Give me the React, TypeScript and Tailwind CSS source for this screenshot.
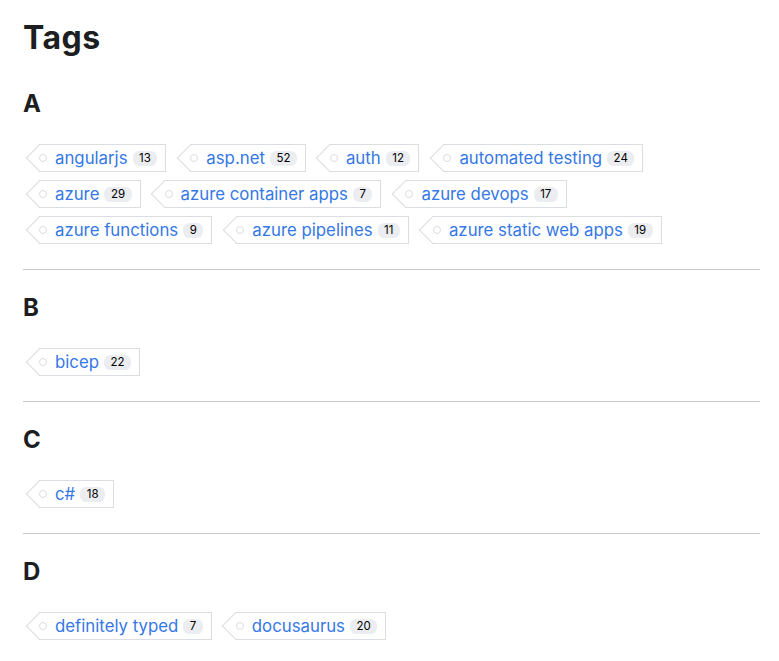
import React from "react";

type Tag = { name: string; count: number };

const sections: { letter: string; tags: Tag[] }[] = [
  {
    letter: "A",
    tags: [
      { name: "angularjs", count: 13 },
      { name: "asp.net", count: 52 },
      { name: "auth", count: 12 },
      { name: "automated testing", count: 24 },
      { name: "azure", count: 29 },
      { name: "azure container apps", count: 7 },
      { name: "azure devops", count: 17 },
      { name: "azure functions", count: 9 },
      { name: "azure pipelines", count: 11 },
      { name: "azure static web apps", count: 19 },
    ],
  },
  { letter: "B", tags: [{ name: "bicep", count: 22 }] },
  { letter: "C", tags: [{ name: "c#", count: 18 }] },
  {
    letter: "D",
    tags: [
      { name: "definitely typed", count: 7 },
      { name: "docusaurus", count: 20 },
    ],
  },
];

function TagItem({ tag }: { tag: Tag }) {
  return (
    <li className="ml-4 mr-2">
      <a
        href="#"
        className="relative flex h-[28px] items-center border border-l-0 border-[#dadde1] pl-4 pr-2 text-[16.8px] leading-[26px] text-[#3578e5]"
      >
        <span className="absolute right-full top-1/2 h-[19.5px] w-[19.5px] translate-x-1/2 -translate-y-1/2 -rotate-45 border-l border-t border-[#dadde1]" />
        <span className="absolute left-0 top-1/2 h-[8px] w-[8px] -translate-y-1/2 rounded-full border border-[#dadde1]" />
        {tag.name}
        <span className="ml-[5px] flex h-[15px] items-center rounded-[6.4px] bg-[#ebedf0] px-[6.5px] text-[11.5px] leading-[13px] text-black">
          {tag.count}
        </span>
      </a>
    </li>
  );
}

export default function App() {
  return (
    <div
      className="min-h-[661px] bg-white pl-[23px] pr-[19px] pt-[18px] text-[#1c1e21]"
      style={{ fontFamily: "Inter, 'Noto Sans', sans-serif" }}
    >
      <h1 className="text-[32px] font-bold leading-[40px] tracking-[0.5px]">Tags</h1>
      <div className="mt-[31px]">
        {sections.map((s, i) => (
          <section key={s.letter}>
            <h2 className="mb-[25px] text-[24px] font-bold leading-[30px]">{s.letter}</h2>
            <ul className="flex flex-wrap gap-y-2">
              {s.tags.map((t) => (
                <TagItem key={t.name} tag={t} />
              ))}
            </ul>
            {i < sections.length - 1 && (
              <hr className="mb-[23px] mt-[25px] h-px border-0 bg-[#c8c8c8]" />
            )}
          </section>
        ))}
      </div>
    </div>
  );
}
